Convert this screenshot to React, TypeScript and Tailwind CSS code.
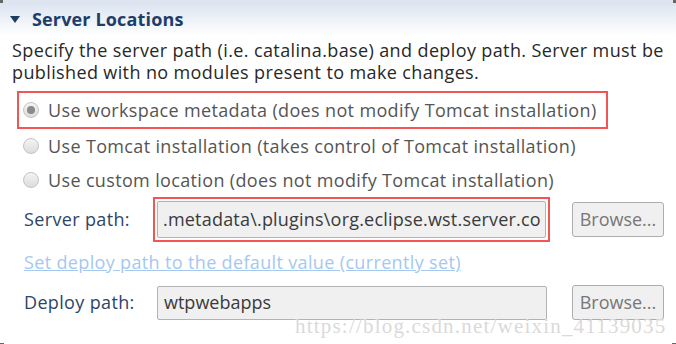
import React from "react";

const font = { fontFamily: '"Open Sans", "Noto Sans", sans-serif' };

const Radio = ({ checked }: { checked?: boolean }) => (
  <span className="w-[16px] h-[16px] rounded-full border border-[#c4c4c4] bg-gradient-to-b from-[#f4f4f4] to-[#dcdcdc] flex items-center justify-center shrink-0">
    {checked && <span className="w-[8px] h-[8px] rounded-full bg-[#8a8a8a]" />}
  </span>
);

const RadioRow = ({ label, checked }: { label: string; checked?: boolean }) => (
  <div className="flex items-center gap-[9px] h-[34px]">
    <Radio checked={checked} />
    <span className="text-[18px] tracking-[0.35px] text-[#555]">{label}</span>
  </div>
);

const Browse = () => (
  <button className="w-[92px] h-[35px] border border-[#adadad] rounded-[3px] bg-[#f0f0f0] text-[18px] text-[#777]">
    Browse...
  </button>
);

export default function App() {
  return (
    <div className="w-[676px] h-[344px] bg-white relative overflow-hidden" style={font}>
      <div className="h-[2px] bg-[#dfe5ee]" />
      <div className="h-[34px] bg-gradient-to-b from-[#dbe4f0] to-white flex items-center pl-[10px] gap-[12px]">
        <svg width="10" height="7" viewBox="0 0 10 7">
          <path d="M0 0 H10 L5 7 Z" fill="#1f3b64" />
        </svg>
        <span className="text-[18px] font-bold tracking-[0.15px] text-[#1d3d6b]">Server Locations</span>
      </div>
      <p className="mt-[3px] px-[12px] text-[18px] tracking-[0.38px] leading-[22px] text-[#282828]">
        Specify the server path (i.e. catalina.base) and deploy path. Server must be published with no modules
        present to make changes.
      </p>
      <div className="pl-[17px] mt-[8px]">
        <div className="w-[591px] h-[38px] border-2 border-[#f25555] pl-[4px] flex items-center">
          <RadioRow label="Use workspace metadata (does not modify Tomcat installation)" checked />
        </div>
        <div className="pl-[6px]">
          <RadioRow label="Use Tomcat installation (takes control of Tomcat installation)" />
          <RadioRow label="Use custom location (does not modify Tomcat installation)" />
        </div>
      </div>
      <div className="pl-[24px] pr-[12px]">
        <div className="flex items-center h-[45px]">
          <span className="w-[129px] text-[18px] tracking-[0.35px] text-[#2d4566]">Server path:</span>
          <div className="w-[397px] h-[45px] border-2 border-[#f25555] p-[2px]">
            <div className="h-full border border-[#b3b3b3] rounded-[2px] bg-[#f0f0f0] flex items-center px-[5px] text-[18px] tracking-[0.2px] text-[#3a3a3a] overflow-hidden whitespace-nowrap">
              .metadata\.plugins\org.eclipse.wst.server.co
            </div>
          </div>
          <div className="ml-[22px]">
            <Browse />
          </div>
        </div>
        <div className="h-[40px] flex items-center">
          <span className="text-[18px] tracking-[0.35px] text-[#a5c8f0] underline">
            Set deploy path to the default value (currently set)
          </span>
        </div>
        <div className="flex items-center h-[41px]">
          <span className="w-[133px] text-[18px] tracking-[0.35px] text-[#2d4566]">Deploy path:</span>
          <div className="w-[390px] h-[34px] border border-[#b3b3b3] rounded-[2px] bg-[#f0f0f0] flex items-center px-[6px] text-[18px] text-[#3a3a3a]">
            wtpwebapps
          </div>
          <div className="ml-[25px]">
            <Browse />
          </div>
        </div>
      </div>
      <div
        className="absolute left-[295px] top-[312px] text-[21px] leading-[28px] text-[#dadada] tracking-[1.2px]"
        style={{ fontFamily: '"Liberation Serif", serif' }}
      >
        https://blog.csdn.net/weixin_41139035
      </div>
      <div className="absolute left-0 top-0 w-[3px] h-[3px] bg-[#666]" />
      <div className="absolute right-0 top-0 w-[3px] h-[3px] bg-[#666]" />
      <div className="absolute left-0 bottom-0 w-[4px] h-[1px] bg-[#666]" />
      <div className="absolute right-0 bottom-0 w-[4px] h-[1px] bg-[#666]" />
    </div>
  );
}
